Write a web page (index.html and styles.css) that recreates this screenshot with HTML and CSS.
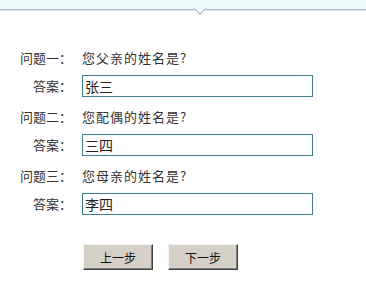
FILE: index.html
```html
<!DOCTYPE html>
<html>
	<head>
		<meta charset="utf-8">
		<title>密码保护问题</title>
		<link rel="stylesheet" href="styles.css">
	</head>
	<body>
		<div class="topbar"></div>
		<form class="qa-form">
			<div class="label">问题一：</div>
			<div class="question">您父亲的姓名是?</div>
			<div class="label answer-label">答案：</div>
			<div class="answer"><input type="text" value="张三"></div>

			<div class="label">问题二：</div>
			<div class="question">您配偶的姓名是?</div>
			<div class="label answer-label">答案：</div>
			<div class="answer"><input type="text" value="三四"></div>

			<div class="label">问题三：</div>
			<div class="question">您母亲的姓名是?</div>
			<div class="label answer-label">答案：</div>
			<div class="answer"><input type="text" value="李四"></div>

			<div></div>
			<div class="buttons">
				<button type="button">上一步</button>
				<button type="button">下一步</button>
			</div>
		</form>
	</body>
</html>
```

FILE: styles.css
```css
* {
	margin: 0;
	padding: 0;
	box-sizing: border-box;
}
body {
	font-family: "Noto Sans CJK SC", "Noto Sans", sans-serif;
	font-size: 13px;
	color: #333;
	background: #fff;
}
.topbar {
	position: relative;
	height: 10px;
	background: #eefbfd;
	border-bottom: 1px solid #b2bfcf;
	box-shadow: 0 1px 0 #dfe6ee;
}
.topbar::after {
	content: "";
	position: absolute;
	left: 195px;
	top: 3px;
	width: 9px;
	height: 9px;
	background: #eefbfd;
	border-right: 1px solid #b2bfcf;
	border-bottom: 1px solid #b2bfcf;
	transform: rotate(45deg);
}
.qa-form {
	display: grid;
	grid-template-columns: 72px 231px;
	column-gap: 10px;
	padding-top: 39px;
}
.label {
	text-align: right;
	line-height: 18px;
	margin-top: 11px;
}
.label:first-child {
	margin-top: 0;
}
.question {
	line-height: 18px;
	margin-top: 11px;
	letter-spacing: 1px;
}
.label:first-child + .question {
	margin-top: 0;
}
.answer-label {
	margin-top: 8px;
	line-height: 22px;
}
.answer {
	margin-top: 8px;
}
.answer input {
	display: block;
	width: 231px;
	height: 22px;
	border: 1px solid #3f7f8c;
	padding: 0 2px;
	font-family: "Noto Sans CJK SC", "Noto Sans", sans-serif;
	font-size: 14px;
	color: #222;
	background: #fff;
	outline: none;
}
.buttons {
	display: flex;
	gap: 15px;
	margin-top: 29px;
	padding-left: 1px;
}
.buttons button {
	width: 70px;
	height: 26px;
	background: #d4d0c8;
	border: 1px solid;
	border-color: #f4f3ef #404040 #404040 #f4f3ef;
	box-shadow: inset -1px -1px 0 #808080;
	font-family: "Noto Sans CJK SC", "Noto Sans", sans-serif;
	font-size: 12px;
	color: #111;
}
```
